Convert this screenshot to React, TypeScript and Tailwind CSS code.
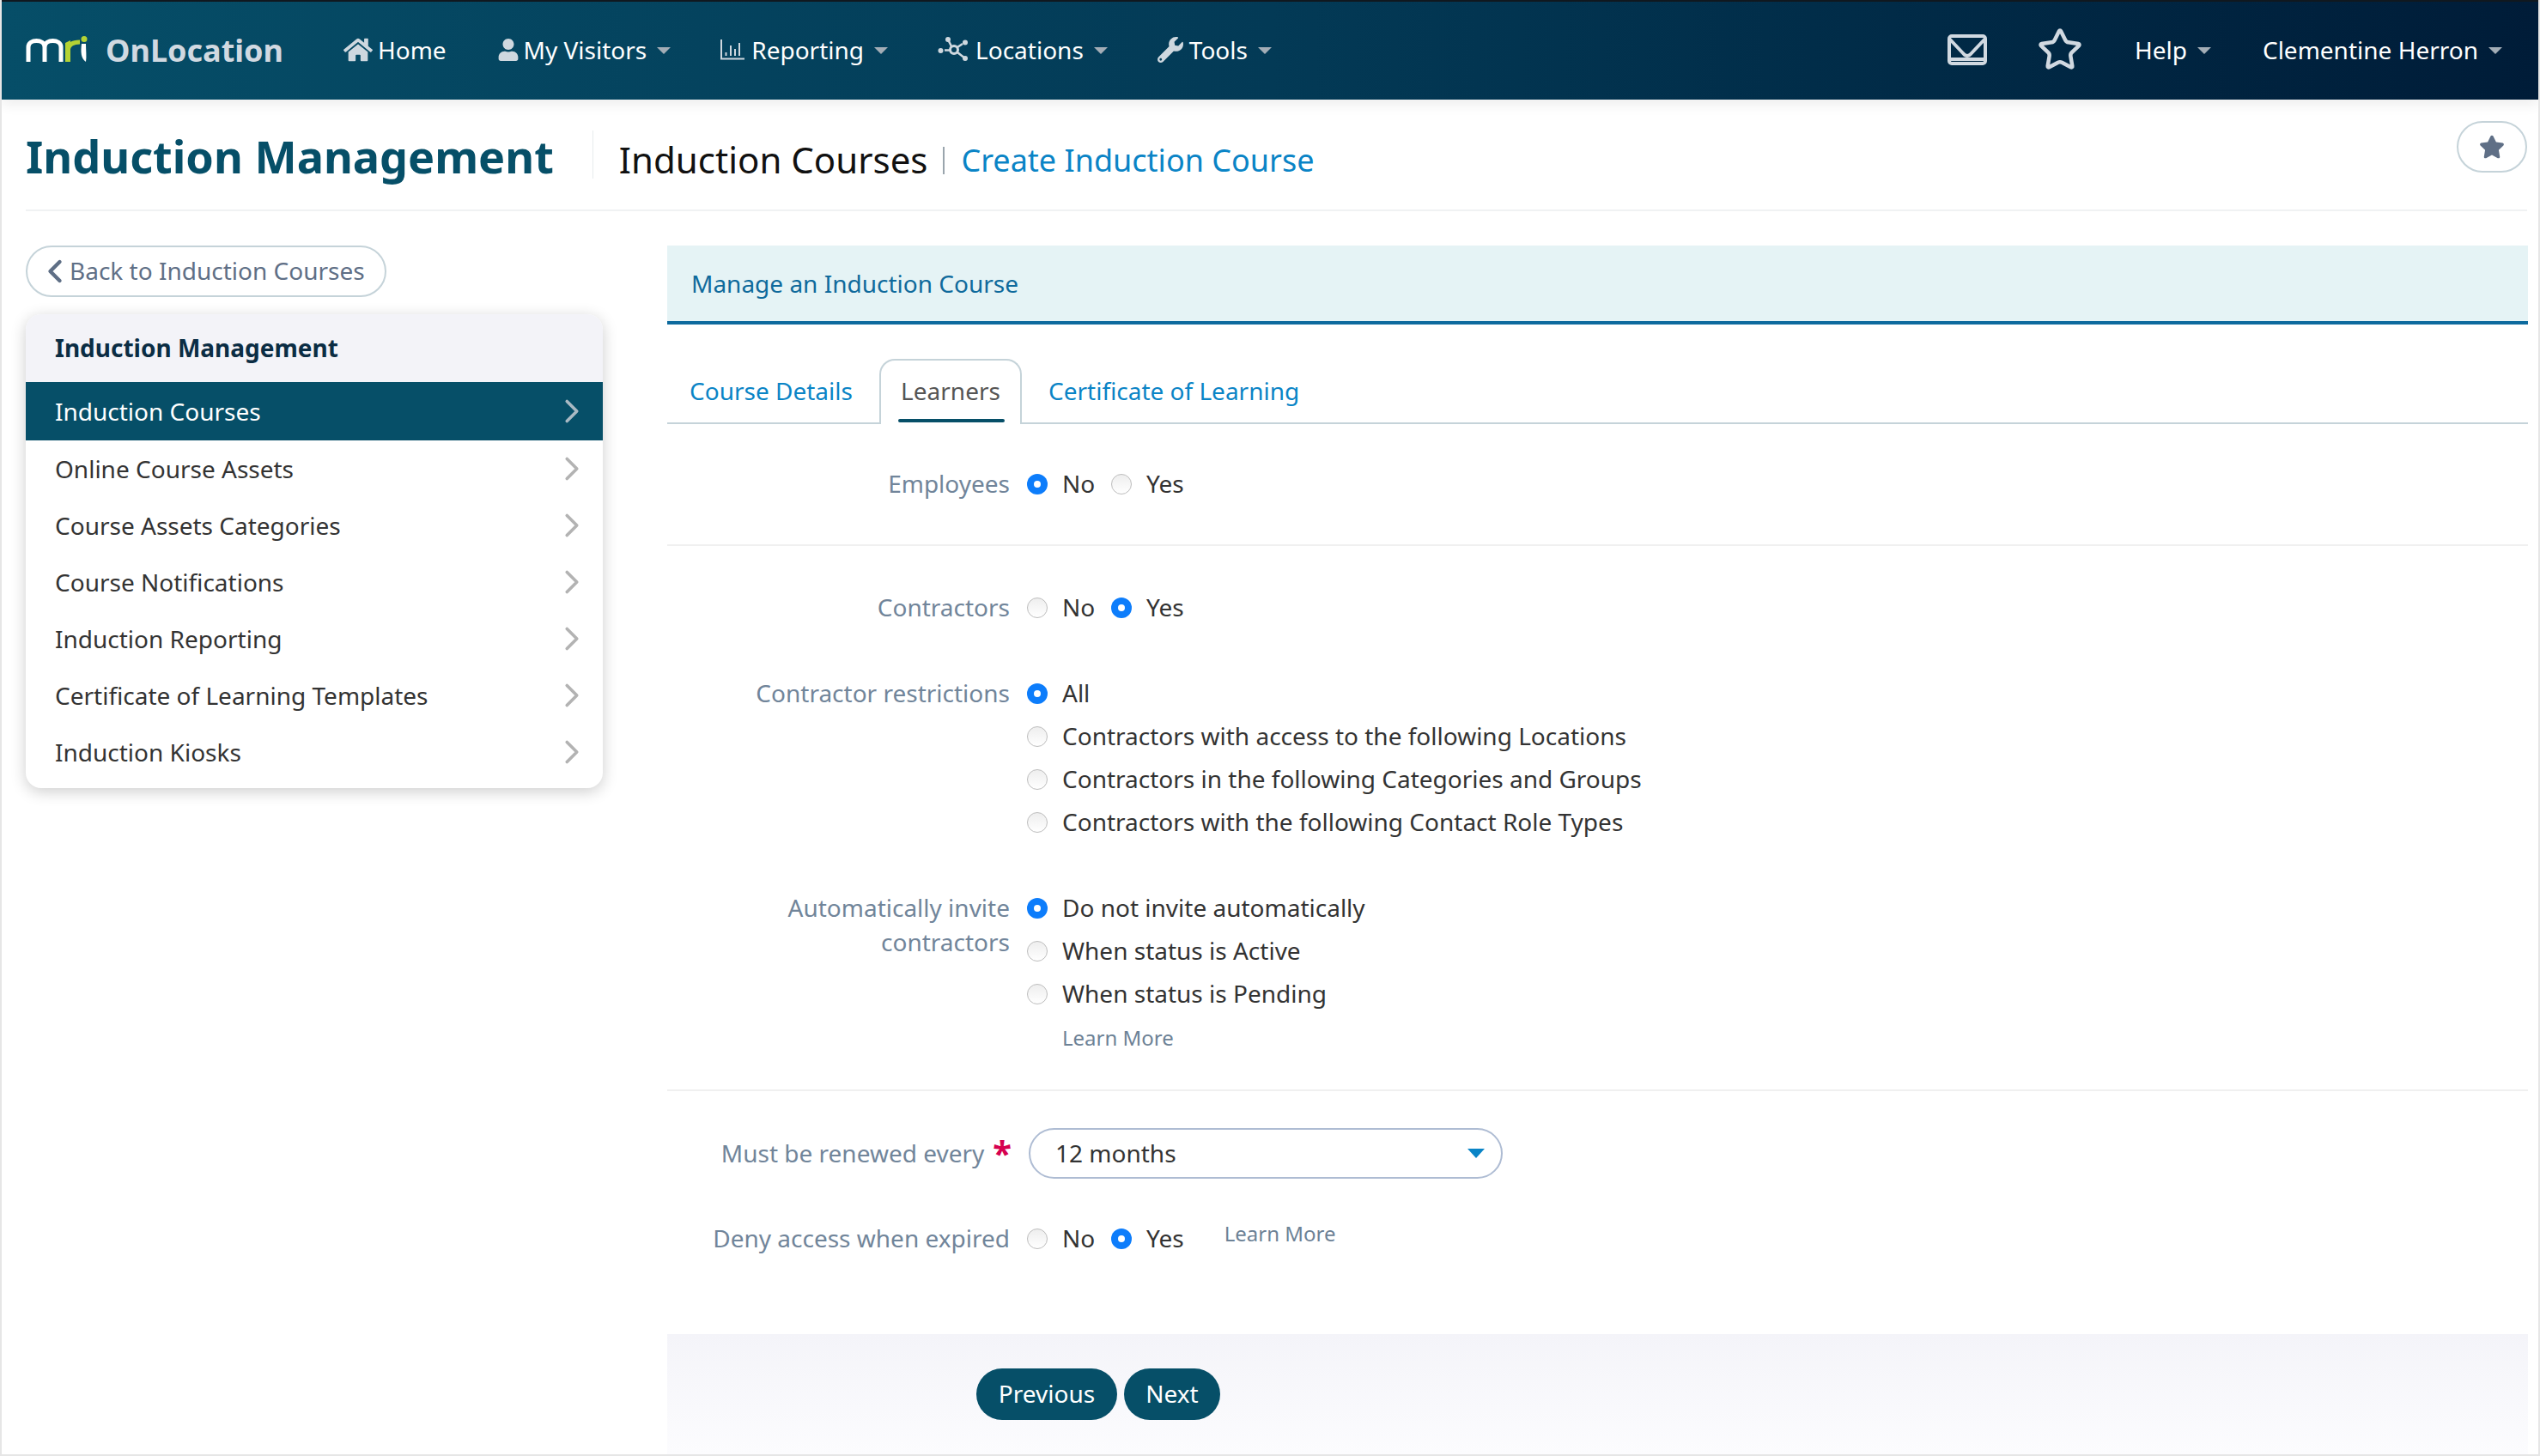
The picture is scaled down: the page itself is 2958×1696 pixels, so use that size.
import { ChevronLeft, ChevronRight, Star } from 'lucide-react';
import { FaHome, FaStar, FaUser, FaWrench } from 'react-icons/fa';

const menuItems = [
  'Induction Courses',
  'Online Course Assets',
  'Course Assets Categories',
  'Course Notifications',
  'Induction Reporting',
  'Certificate of Learning Templates',
  'Induction Kiosks',
];

function Caret() {
  return <span className="ml-3 mt-[2px] inline-block h-0 w-0 border-x-[8px] border-t-[8px] border-x-transparent border-t-[#a3adb6]" />;
}

function Logo() {
  return (
    <svg width="72" height="32" viewBox="0 0 72 32" className="shrink-0">
      <path d="M3 30V13C3 3 22 3 22 13V30M22 13C22 3 41 3 41 13V30" fill="none" stroke="#fff" strokeWidth="5" />
      <path d="M46 30V8L52 5V30Z" fill="#b5d334" />
      <path d="M49 16C50 9 56 7 63 7" fill="none" stroke="#b5d334" strokeWidth="5" />
      <path d="M65 9C64 18 64 26 70 30C71 24 70 16 70 9Z" fill="#fff" />
      <circle cx="68" cy="3.500" r="3.500" fill="#b5d334" />
    </svg>
  );
}

function ChartIcon() {
  return (
    <svg width="28" height="24" viewBox="0 0 28 24" fill="none" stroke="#cfd8df" className="shrink-0">
      <path d="M1 0V22.5H28" strokeWidth="2" />
      <path d="M6.500 19V15M12 19V7M17 19V11M22 19V4" strokeWidth="2" />
    </svg>
  );
}

function HubIcon() {
  return (
    <svg width="37" height="30" viewBox="0 0 37 30" fill="none" stroke="#cfd8df" className="shrink-0">
      <circle cx="19" cy="15" r="4.500" strokeWidth="3" />
      <path d="M12 3L16 11M23 12L29 8M23 18L32 25M8 15.500H14" strokeWidth="2.500" />
      <g fill="#cfd8df" stroke="none">
        <circle cx="12" cy="3" r="3" />
        <circle cx="32" cy="6.500" r="3" />
        <circle cx="3.500" cy="16" r="3" />
        <circle cx="32" cy="25" r="3" />
      </g>
    </svg>
  );
}

function MailIcon() {
  return (
    <svg width="46" height="36" viewBox="0 0 46 36" fill="none" stroke="#d1d9e1" strokeWidth="4" className="shrink-0">
      <rect x="2" y="2" width="42" height="32" rx="3" />
      <path d="M3 6L19 23C21 25.500 25 25.500 27 23L43 6M3 29H43" />
    </svg>
  );
}

function Radio({ checked = false }: { checked?: boolean }) {
  if (checked) {
    return (
      <span className="flex h-6 w-6 shrink-0 items-center justify-center rounded-full bg-[#0d7dfb]">
        <span className="h-2 w-2 rounded-full bg-white" />
      </span>
    );
  }
  return <span className="h-6 w-6 shrink-0 rounded-full border border-[#bdbdbd] bg-gradient-to-b from-[#eeeeee] to-white" />;
}

function Option({ label, checked }: { label: string; checked?: boolean }) {
  return (
    <div className="flex h-[50px] items-center gap-[17px] text-[#333]">
      <Radio checked={checked} />
      <span className="pb-[2px]">{label}</span>
    </div>
  );
}

function YesNo({ yes }: { yes: boolean }) {
  return (
    <div className="flex h-[50px] items-center text-[#333]">
      <Radio checked={!yes} />
      <span className="ml-[17px] w-[57px] pb-[2px]">No</span>
      <Radio checked={yes} />
      <span className="ml-[17px] pb-[2px]">Yes</span>
    </div>
  );
}

function Row({ label, children, className = '' }: { label: React.ReactNode; children: React.ReactNode; className?: string }) {
  return (
    <div className={`flex ${className}`}>
      <div className="w-[399px] shrink-0 text-right leading-[40px] text-[#71859a] pt-[4px]">{label}</div>
      <div className="ml-[20px]">{children}</div>
    </div>
  );
}

export default function App() {
  return (
    <div className="relative flex h-[1696px] w-[2958px] flex-col overflow-hidden border-x-[2px] border-b-[2px] border-[#e6e6e6] bg-white text-[28px] [font-family:'Noto_Sans',sans-serif]">
      {/* Header */}
      <header className="flex h-[116px] shrink-0 items-center border-t-[2px] border-[#10181f] bg-gradient-to-r from-[#064e68] via-[#033a56] to-[#001c38] text-white shadow-[0_6px_14px_rgba(0,0,0,0.07)]">
        <div className="ml-[28px] -mt-[2px]"><Logo /></div>
        <span className="ml-[21px] text-[36px] font-bold text-[#d1d9e1]">OnLocation</span>
        <nav className="ml-[70px] -mt-[2px] flex items-center text-[#fff]">
          <FaHome size={34} color="#cfd8df" />
          <span className="ml-[6px]">Home</span>
          <FaUser size={26} color="#cfd8df" className="ml-[59px]" />
          <span className="ml-[5px]">My Visitors</span>
          <Caret />
          <span className="ml-[58px]"><ChartIcon /></span>
          <span className="ml-[8px]">Reporting</span>
          <Caret />
          <span className="ml-[58px]"><HubIcon /></span>
          <span className="ml-[7px]">Locations</span>
          <Caret />
          <FaWrench size={30} color="#cfd8df" className="ml-[58px]" />
          <span className="ml-[7px]">Tools</span>
          <Caret />
        </nav>
        <div className="ml-auto mr-[42px] -mt-[2px] flex items-center">
          <MailIcon />
          <Star size={54} color="#d1d9e1" strokeWidth={2} className="ml-[58px]" />
          <span className="ml-[60px]">Help</span>
          <Caret />
          <span className="ml-[60px]">Clementine Herron</span>
          <Caret />
        </div>
      </header>

      {/* Page title */}
      <div className="ml-[28px] mr-[13px] flex h-[130px] shrink-0 items-center border-b-[2px] border-[#f0f2f3]">
        <h1 className="mt-[4px] text-[52.200px] font-bold leading-none text-[#064f68]">Induction Management</h1>
        <span className="ml-[45px] h-[56px] w-px bg-[#e8ecee]" />
        <span className="ml-[30px] mt-[10px] text-[42px] text-[#111]">Induction Courses</span>
        <span className="ml-[18px] mt-[14px] h-[32px] w-[2px] bg-[#9aa5ad]" />
        <span className="ml-[19px] mt-[14px] text-[36px] text-[#0a84c6]">Create Induction Course</span>
        <button className="ml-auto mb-[18px] flex h-[60px] w-[82px] items-center justify-center rounded-full border-2 border-[#c5d3d9] bg-white">
          <FaStar size={30} color="#5f6f86" />
        </button>
      </div>

      <div className="flex min-h-0 flex-1">
        {/* Sidebar */}
        <aside className="ml-[28px] mt-[40px] w-[672px] shrink-0">
          <button className="flex h-[60px] w-[420px] items-center rounded-full border-2 border-[#c5d3d9] pl-[10px] text-[#5f6f86]">
            <ChevronLeft size={44} strokeWidth={2.400} />
            <span className="-ml-[5px] pb-[2px]">Back to Induction Courses</span>
          </button>
          <div className="mt-[20px] overflow-hidden rounded-[18px] bg-white pb-[9px] shadow-[0_4px_18px_rgba(0,0,0,0.2)]">
            <div className="flex h-[79px] items-center bg-[#f3f3f8] pb-[2px] pl-[34px] font-bold text-[#0b2d44]">Induction Management</div>
            {menuItems.map((item, i) => (
              <div
                key={item}
                className={i === 0
                  ? 'flex h-[68px] items-center justify-between bg-[#064f68] pl-[34px] pr-[13px] text-white'
                  : 'flex h-[66px] items-center justify-between pl-[34px] pr-[13px] text-[#333]'}
              >
                <span>{item}</span>
                <ChevronRight size={46} strokeWidth={1.900} color={i === 0 ? '#a9b9c3' : '#b3b3b3'} />
              </div>
            ))}
          </div>
        </aside>

        {/* Content */}
        <main className="ml-[75px] mr-[12px] mt-[40px] flex min-w-0 flex-1 flex-col">
          <div className="flex h-[92px] shrink-0 items-center border-b-[4px] border-[#0d6a9e] bg-[#e5f3f5] pb-[1px] pl-[28px] text-[#0f6a9c]">
            Manage an Induction Course
          </div>

          <div className="mt-[40px] flex h-[76px] shrink-0 items-end border-b-2 border-[#c5d3d9] pl-[26px]">
            <span className="w-[221px] pb-[16px] text-[#0a84c6]">Course Details</span>
            <div className="relative -mb-[2px] flex h-[76px] w-[166px] items-start justify-center rounded-t-[18px] border-2 border-b-0 border-[#c5d3d9] bg-white pt-[14px] text-[#555]">
              Learners
              <span className="absolute bottom-[2px] left-[20px] h-1 w-[124px] rounded-sm bg-[#064f68]" />
            </div>
            <span className="ml-[31px] pb-[16px] text-[#0a84c6]">Certificate of Learning</span>
          </div>

          <Row label="Employees" className="mt-[45px] h-[97px] border-b-2 border-[#f0f0f0]">
            <YesNo yes={false} />
          </Row>
          <Row label="Contractors" className="mt-[47px]">
            <YesNo yes={true} />
          </Row>
          <Row label="Contractor restrictions" className="mt-[50px]">
            <Option label="All" checked />
            <Option label="Contractors with access to the following Locations" />
            <Option label="Contractors in the following Categories and Groups" />
            <Option label="Contractors with the following Contact Role Types" />
          </Row>
          <Row label={<>Automatically invite<br />contractors</>} className="mt-[50px]">
            <Option label="Do not invite automatically" checked />
            <Option label="When status is Active" />
            <Option label="When status is Pending" />
            <div className="ml-[41px] mt-[8px] text-[24px] text-[#6d8296]">Learn More</div>
          </Row>

          <div className="mt-[42px] h-[2px] shrink-0 bg-[#f0f0f0]" />

          <div className="mt-[43px] flex items-center">
            <div className="flex w-[401px] shrink-0 items-center justify-end text-[#71859a]">
              <span className="pb-[2px]">Must be renewed every</span>
              <span className="ml-[10px] -mt-[2px] text-[40px] leading-none font-bold text-[#d6004f]">*</span>
            </div>
            <div className="ml-[20px] flex h-[59px] w-[552px] items-center justify-between rounded-full border-2 border-[#aebcd3] pl-[29px] pr-[19px] text-[#333]">
              <span className="pb-[2px]">12 months</span>
              <span className="h-0 w-0 border-x-[10px] border-t-[11px] border-x-transparent border-t-[#0a84c6]" />
            </div>
          </div>

          <Row label="Deny access when expired" className="mt-[45px]">
            <div className="flex">
              <YesNo yes={true} />
              <span className="ml-[47px] mt-[1px] text-[24px] leading-[36px] text-[#6d8296]">Learn More</span>
            </div>
          </Row>

          <div className="mt-auto flex h-[140px] shrink-0 items-start gap-2 bg-gradient-to-b from-[#f4f4f9] to-[#fcfcfe] pl-[360px] pt-[40px]">
            <button className="flex h-[60px] w-[164px] items-center justify-center rounded-full bg-[#064f68] pb-[2px] text-white">Previous</button>
            <button className="flex h-[60px] w-[112px] items-center justify-center rounded-full bg-[#064f68] pb-[2px] text-white">Next</button>
          </div>
        </main>
      </div>
    </div>
  );
}
